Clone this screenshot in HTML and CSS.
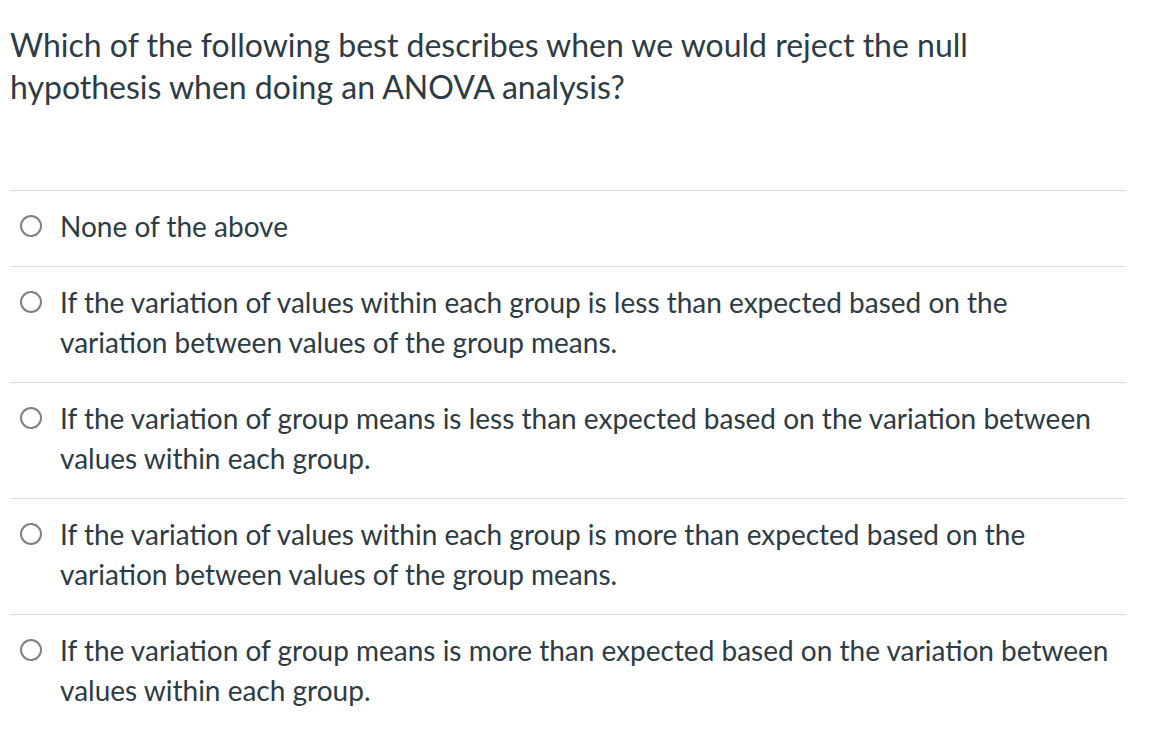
FILE: index.html
```html
<!DOCTYPE html>
<html>
<head>
<meta charset="utf-8">
<link rel="stylesheet" href="styles.css">
</head>
<body>
<div class="quiz">
  <div class="question">Which of the following best describes when we would reject the null hypothesis when doing an ANOVA analysis?</div>
  <div class="answers">
    <div class="answer"><span class="radio"></span><span class="label">None of the above</span></div>
    <div class="answer"><span class="radio"></span><span class="label">If the variation of values within each group is less than expected based on the variation between values of the group means.</span></div>
    <div class="answer"><span class="radio"></span><span class="label">If the variation of group means is less than expected based on the variation between values within each group.</span></div>
    <div class="answer"><span class="radio"></span><span class="label">If the variation of values within each group is more than expected based on the variation between values of the group means.</span></div>
    <div class="answer"><span class="radio"></span><span class="label">If the variation of group means is more than expected based on the variation between values within each group.</span></div>
  </div>
</div>
</body>
</html>
```
FILE: styles.css
```css
html, body {
  margin: 0;
  padding: 0;
  background: #fff;
}
body {
  font-family: Lato, "Open Sans", sans-serif;
  color: #2d3b45;
}
.quiz {
  width: 1116px;
  padding: 24px 0 0 10px;
}
.question {
  font-size: 32px;
  line-height: 42px;
  margin-bottom: 82px;
}
.answer {
  display: flex;
  align-items: flex-start;
  border-top: 1px solid #dddddd;
  padding: 15px 12px 20px 0;
  font-size: 28px;
  line-height: 40px;
}
.radio {
  flex: none;
  box-sizing: border-box;
  width: 22px;
  height: 22px;
  border: 2px solid #808080;
  border-radius: 50%;
  margin: 9px 18px 0 10px;
}
.label {
  flex: 1;
}
```
